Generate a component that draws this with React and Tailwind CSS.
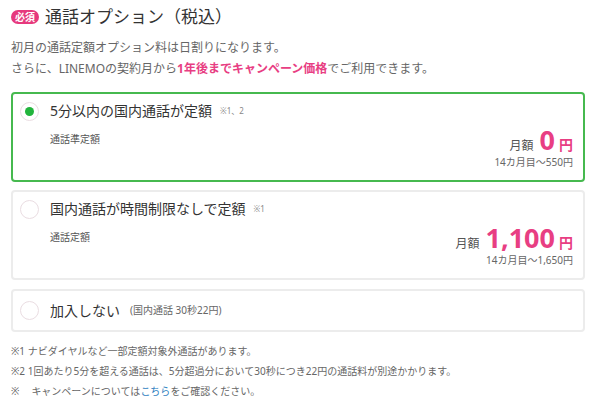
const font = { fontFamily: '"Noto Sans", "Noto Sans CJK JP", sans-serif' }

const plans = [
  {
    id: 'short',
    title: '5分以内の国内通話が定額',
    note: '※1、2',
    sub: '通話準定額',
    price: '0',
    after: '14カ月目～550円',
  },
  {
    id: 'unlimited',
    title: '国内通話が時間制限なしで定額',
    note: '※1',
    sub: '通話定額',
    price: '1,100',
    after: '14カ月目～1,650円',
  },
]

function Radio({ checked }) {
  return (
    <span className="flex h-[19px] w-[19px] shrink-0 items-center justify-center rounded-full border border-[#eadde2] bg-white">
      {checked && <span className="h-[9px] w-[9px] rounded-full bg-[#22b43c]" />}
    </span>
  )
}

function PlanCard({ plan, checked }) {
  return (
    <div
      className={`flex h-[90px] flex-col rounded-[4px] border-2 px-[7px] pt-[7px] ${
        checked ? 'border-[#46b94f]' : 'border-[#ececec]'
      }`}
    >
      <div className="flex items-center">
        <Radio checked={checked} />
        <span className="ml-[11px] text-[14px] leading-[20px] text-[#333]">{plan.title}</span>
        <span className="ml-[8px] text-[8px] text-[#888]">{plan.note}</span>
      </div>
      <div className="mt-[5px] flex items-start justify-between">
        <div className="ml-[30px] mt-[6px] text-[10px] leading-[14px] text-[#555]">{plan.sub}</div>
        <div className="flex flex-col items-end pr-[3px]">
          <div className="flex h-[28px] items-baseline text-[#e83e83]">
            <span className="mr-[6px] text-[12px] text-[#555]">月額</span>
            <span className="text-[27px] font-bold leading-[28px]">{plan.price}</span>
            <span className="ml-[4px] text-[14px] font-bold">円</span>
          </div>
          <div className="mt-[2px] text-[10px] leading-[13px] text-[#666]">{plan.after}</div>
        </div>
      </div>
    </div>
  )
}

export default function App() {
  const selected = 'short'

  return (
    <div className="h-[406px] w-[600px] bg-white px-[11px] pr-[15px] pt-[5px]" style={font}>
      <div className="flex items-center">
        <span className="rounded-[7px] bg-[#e6397d] px-[4px] py-[1px] text-[10px] leading-[12px] font-bold text-white">必須</span>
        <h1 className="ml-[6px] text-[17px] leading-[24px] text-[#333]">通話オプション（税込）</h1>
      </div>
      <p className="mt-[9px] text-[12px] leading-[20px] text-[#666]">初月の通話定額オプション料は日割りになります。</p>
      <p className="mt-[1px] text-[12px] leading-[20px] text-[#666]">
        さらに、LINEMOの契約月から<span className="font-bold text-[#e83e83]">1年後までキャンペーン価格</span>でご利用できます。
      </p>

      <div className="mt-[13px] flex flex-col gap-[8px]">
        {plans.map((p) => (
          <PlanCard key={p.id} plan={p} checked={selected === p.id} />
        ))}
        <div className="mt-[1px] flex h-[43px] items-center rounded-[4px] border-2 border-[#ececec] px-[7px]">
          <Radio checked={false} />
          <span className="ml-[11px] text-[14px] text-[#333]">加入しない</span>
          <span className="ml-[10px] text-[10px] text-[#666]">(国内通話 30秒22円)</span>
        </div>
      </div>

      <div className="mt-[9px] flex flex-col text-[10px] leading-[20px] text-[#666]">
        <p>※1 ナビダイヤルなど一部定額対象外通話があります。</p>
        <p>※2 1回あたり5分を超える通話は、5分超過分において30秒につき22円の通話料が別途かかります。</p>
        <p>
          ※<span className="ml-[12px]">キャンペーンについては</span>
          <span className="text-[#2f7fc1]">こちら</span>をご確認ください。
        </p>
      </div>
    </div>
  )
}
